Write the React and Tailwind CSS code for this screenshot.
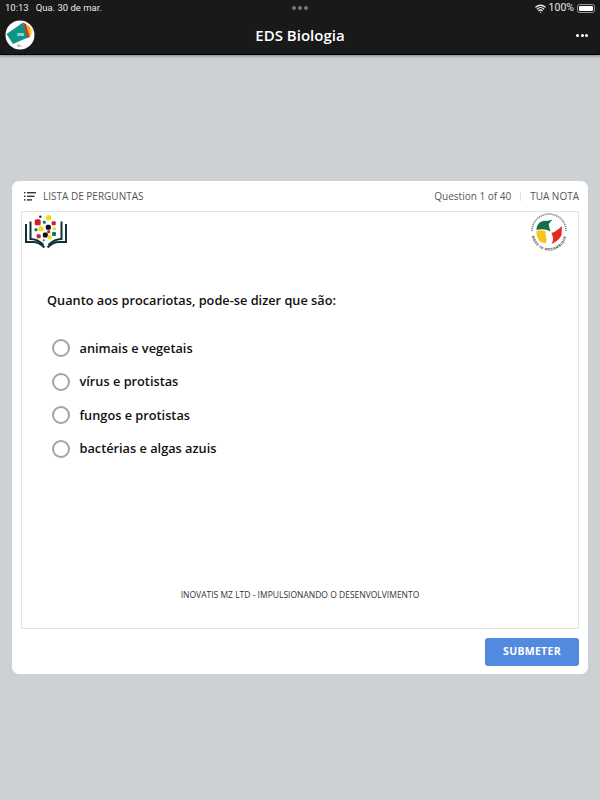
import React from "react";
import { Wifi } from "lucide-react";

const options = [
  "animais e vegetais",
  "vírus e protistas",
  "fungos e protistas",
  "bactérias e algas azuis",
];

const EdsLogo = () => (
  <svg viewBox="0 0 30 30" className="w-[30px] h-[30px]">
    <circle cx="15" cy="15" r="14.5" fill="#fff" />
    <path d="M18 2.5 L21 4 L25 17 L22 18 Z" fill="#e8212b" />
    <path d="M21 4 L25 7 L26 15 L24.5 17 Z" fill="#f7a81b" />
    <path d="M25 7 L28 10.5 L26 15 Z" fill="#f8e04a" />
    <path d="M1.5 14 L18 2.5 L23 17.5 L8 24 Z" fill="#0f9488" />
    <text x="15.5" y="15.5" fontSize="3.6" fontWeight="700" fill="#fff" textAnchor="middle" fontFamily="Open Sans, sans-serif">EDS</text>
    <text x="14.5" y="26.5" fontSize="3" fill="#555" textAnchor="middle" fontFamily="Open Sans, sans-serif">Bio</text>
  </svg>
);

const BookLogo = () => (
  <svg viewBox="0 0 44 34" className="w-[44px] h-[34px]">
    <g fill="none" stroke="#11303a" strokeWidth="2">
      <path d="M2 9 V27 H9 C13 27 17 29 20.5 32.5" />
      <path d="M42 9 V27 H35 C31 27 27 29 23.5 32.5" />
      <path d="M6.5 6.5 V24 C11 24 16 26.5 19.5 30" />
      <path d="M37.5 6.5 V24 C33 24 28 26.5 24.5 30" />
    </g>
    <circle cx="16.3" cy="1.7" r="1.2" fill="#222" />
    <rect x="22.2" y="0.2" width="5" height="5" rx="1.5" fill="#f8d90f" />
    <rect x="10.7" y="4.3" width="6" height="6" rx="1.5" fill="#cf1f2e" />
    <rect x="18.8" y="5.8" width="3" height="3" rx="1" fill="#0f7a68" />
    <rect x="27.7" y="6.3" width="4" height="4" rx="1" fill="#cf1f2e" />
    <rect x="10.5" y="13.2" width="3" height="3" rx="1" fill="#0f7a68" />
    <rect x="14.5" y="11.2" width="5" height="5" rx="1.5" fill="#f8d90f" />
    <rect x="21.8" y="9.8" width="5" height="5" rx="1.5" fill="#111" />
    <rect x="28.8" y="12.2" width="3" height="3" rx="1" fill="#f8d90f" />
    <rect x="23.2" y="15.2" width="3" height="3" rx="1" fill="#cf1f2e" />
    <rect x="28" y="17" width="4" height="4" rx="1" fill="#0f7a68" />
    <rect x="12.7" y="19.3" width="4" height="4" rx="1" fill="#cf1f2e" />
    <rect x="18.8" y="17.5" width="5" height="5" rx="1.5" fill="#111" />
    <rect x="23.7" y="20.3" width="4" height="4" rx="1" fill="#f8d90f" />
    <circle cx="19.7" cy="25.3" r="1" fill="#0f7a68" />
  </svg>
);

const MozLogo = () => (
  <svg viewBox="0 0 38 38" className="w-[38px] h-[38px]">
    <path d="M2 18 A17 17 0 0 1 36 18" fill="none" stroke="#7d9486" strokeWidth="1.8" strokeDasharray="1.2 0.8" />
    <path id="mozArc" d="M1.5 20 A17.5 17.5 0 0 0 36.5 20" fill="none" />
    <text fontSize="3.5" fontWeight="700" fill="#3c4a44" fontFamily="Open Sans, sans-serif" letterSpacing="0.4">
      <textPath href="#mozArc" startOffset="50%" textAnchor="middle">MADE IN MOZAMBIQUE</textPath>
    </text>
    <path d="M6.5 17 C6.5 11 11 7 17 8 C18 8 20 7 22.5 6.5 C20.5 9 18 10.5 19 13 C19.5 15 20 17 20.5 18.5 C16 16 11 15.5 6.5 17 Z" fill="#16713f" />
    <path d="M6.5 18 C10 16.5 14 17 16 19 C14 22 18 25 16 30 C10 31 6 25 6.5 18 Z" fill="#f5c518" />
    <path d="M32 13 L31.5 22 C30 26 26 29 21.5 31 C24 27 23 24 21.5 20 C25 19 29 16 32 13 Z" fill="#e32a22" />
  </svg>
);

const App = () => {
  return (
    <div className="w-full h-[800px] flex flex-col bg-[#cdd1d4] font-['Open_Sans',sans-serif]">
      <header className="h-[55px] bg-[#191919] border-b border-black shadow-[0_1px_3px_rgba(0,0,0,0.4)] text-white">
        <div className="h-[16px] px-[5px] flex items-center justify-between font-['Roboto',sans-serif] text-[9.5px] text-[#e8e8e8]">
          <div className="flex-1 flex gap-[7px]">
            <span>10:13</span>
            <span>Qua. 30 de mar.</span>
          </div>
          <div className="flex gap-[2px]">
            <span className="w-[4px] h-[4px] rounded-full bg-[#777]" />
            <span className="w-[4px] h-[4px] rounded-full bg-[#777]" />
            <span className="w-[4px] h-[4px] rounded-full bg-[#777]" />
          </div>
          <div className="flex-1 flex items-center justify-end gap-[3px]">
            <Wifi size={11} strokeWidth={3} />
            <span className="text-[10.5px]">100%</span>
            <span className="w-[18px] h-[9px] rounded-[2.5px] border border-[#999] p-[1px] flex">
              <span className="flex-1 bg-white rounded-[1px]" />
            </span>
          </div>
        </div>
        <div className="h-[38px] px-[5px] flex items-center justify-between">
          <div className="flex-1">
            <EdsLogo />
          </div>
          <h1 className="text-[15px] font-semibold">EDS Biologia</h1>
          <div className="flex-1 flex justify-end">
            <div className="flex gap-[1.5px] mr-[7px]">
              <span className="w-[3px] h-[3px] rounded-full bg-white" />
              <span className="w-[3px] h-[3px] rounded-full bg-white" />
              <span className="w-[3px] h-[3px] rounded-full bg-white" />
            </div>
          </div>
        </div>
      </header>

      <main className="flex-1 flex items-center px-[12px]">
        <section className="w-full h-[493px] bg-white rounded-[7px] px-[9px] flex flex-col">
          <div className="h-[30px] flex items-center justify-between text-[10px] text-[#555]">
            <div className="flex items-center gap-[7px] pl-[3px]">
              <svg viewBox="0 0 12 9" className="w-[12px] h-[9px]" fill="#333">
                <rect x="0" y="0" width="1.5" height="1.4" />
                <rect x="3" y="0" width="9" height="1.4" />
                <rect x="0" y="3.6" width="1.5" height="1.4" />
                <rect x="3" y="3.6" width="7.5" height="1.4" />
                <rect x="0" y="7.2" width="1.5" height="1.4" />
                <rect x="3" y="7.2" width="5" height="1.4" />
              </svg>
              <span>LISTA DE PERGUNTAS</span>
            </div>
            <div className="flex items-center">
              <span>Question 1 of 40</span>
              <span className="w-px h-[9px] bg-[#e3e3e3] mx-[9px]" />
              <span>TUA NOTA</span>
            </div>
          </div>

          <div className="h-[418px] border border-[#e4e4e4] flex flex-col">
            <div className="h-[42px] mt-[1px] pl-[2px] pr-[10px] flex justify-between">
              <div className="pt-[2px]">
                <BookLogo />
              </div>
              <MozLogo />
            </div>
            <p className="mt-[36px] pl-[25px] text-[12.75px] font-semibold text-[#111] leading-[18px]">
              Quanto aos procariotas, pode-se dizer que são:
            </p>
            <ul className="mt-[30px] pl-[30px] flex flex-col gap-[14.5px]">
              {options.map((option) => (
                <li key={option} className="flex items-center gap-[9.5px] h-[19px]">
                  <span className="w-[18px] h-[18px] self-start rounded-full border-2 border-[#a3a3a3]" />
                  <span className="text-[12.75px] font-semibold text-[#111]">{option}</span>
                </li>
              ))}
            </ul>
            <p className="mt-auto mb-[26px] text-center text-[8.5px] text-[#333]">
              INOVATIS MZ LTD - IMPULSIONANDO O DESENVOLVIMENTO
            </p>
          </div>

          <div className="flex justify-end pt-[9px]">
            <button
              type="button"
              className="w-[94px] h-[28px] rounded-[3px] bg-[#528ae0] text-white text-[10.5px] font-bold tracking-[0.3px]"
            >
              SUBMETER
            </button>
          </div>
        </section>
      </main>
    </div>
  );
};

export default App;
